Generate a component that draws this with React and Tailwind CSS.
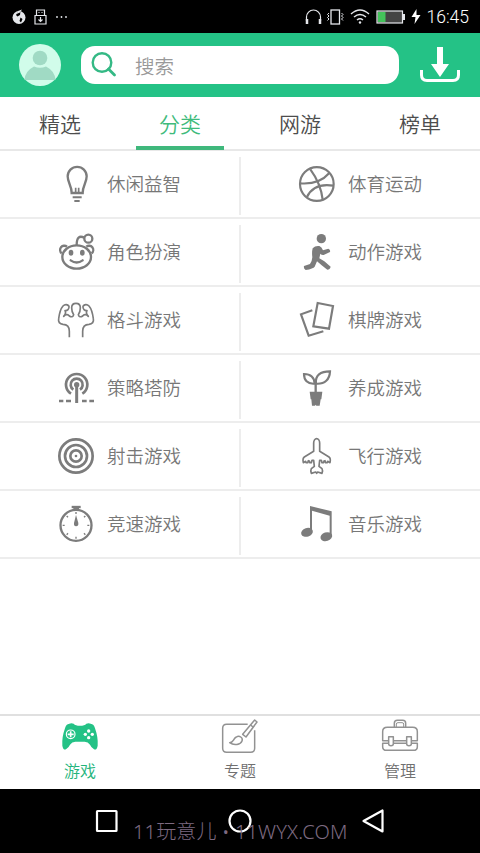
import { useState } from "react";

const BulbIcon = () => (
    <g fill="none" stroke="currentColor" strokeWidth="7">
        <path d="M41 81C41 59 29 50 29 31A28.500 28.500 0 0 1 86 31C86 50 74 59 74 81Z" />
        <path d="M53 80V65M62 80V65" strokeWidth="5" />
        <path d="M44 94H71M49 105H65" strokeWidth="6" />
    </g>
);

const AlienIcon = () => (
    <g fill="none" stroke="currentColor" strokeWidth="7">
        <ellipse cx="56" cy="69" rx="43" ry="35" />
        <path d="M11 58A11 11 0 1 1 27 38M101 58A11 11 0 1 0 85 38" />
        <path d="M56 33C56 10 64 4 79 11" />
        <circle cx="91" cy="14" r="12" />
        <path d="M38 79Q56 92 74 79" strokeLinecap="round" />
        <ellipse cx="39" cy="56" rx="7" ry="9" fill="currentColor" stroke="none" />
        <ellipse cx="73" cy="56" rx="7" ry="9" fill="currentColor" stroke="none" />
    </g>
);

const MuscleIcon = () => (
    <g fill="none" stroke="currentColor" strokeWidth="5" strokeLinejoin="round">
        <path d="M34 106V88C34 74 26 67 15 67C5 66 0 60 2 50C4 35 8 20 15 12C21 6 29 7 33 13C34 21 28 27 21 26C25 31 21 38 17 43C24 35 31 38 34 42C40 46 46 45 47 38C42 31 41 22 41 17C41 7 46 4 54 4C62 4 67 7 67 17C67 22 66 31 61 38C62 45 68 46 74 42C77 38 84 35 91 43C87 38 83 31 87 26C80 27 74 21 75 13C79 7 87 6 93 12C100 20 104 35 106 50C108 60 103 66 93 67C82 67 74 74 74 88V106" />
    </g>
);

const TowerIcon = () => (
    <g fill="none" stroke="currentColor" strokeWidth="8">
        <path d="M39 71A32 32 0 1 1 73 71" />
        <path d="M46 59A18 18 0 1 1 66 59" />
        <path d="M56 46V99" strokeWidth="9" />
        <circle cx="56" cy="44" r="8" fill="currentColor" stroke="none" />
        <path d="M3 93H16M24 93H39M72 93H86M94 93H108" />
    </g>
);

const TargetIcon = () => (
    <g fill="none" stroke="currentColor" strokeWidth="8">
        <circle cx="54" cy="54" r="50" />
        <circle cx="54" cy="54" r="33" />
        <circle cx="54" cy="54" r="17" />
        <circle cx="54" cy="54" r="4" fill="currentColor" stroke="none" />
    </g>
);

const StopwatchIcon = () => (
    <g fill="none" stroke="currentColor" strokeWidth="7">
        <circle cx="54" cy="58" r="46.500" />
        <path d="M41 3H68" />
        <path d="M46 8H63" strokeWidth="9" />
        <path d="M54 27L48 51Q47 61 54 61Q62 61 61 51Z" fill="currentColor" stroke="none" />
        <path d="M54 18V24M54 92V98M14 58H20M88 58H94M26 30L30 34M82 30L78 34M26 86L30 82M82 86L78 82" strokeWidth="4" />
    </g>
);

const BallIcon = () => (
    <g fill="none" stroke="currentColor" strokeWidth="6.500">
        <circle cx="53.500" cy="54" r="50.500" />
        <path d="M3 52C40 55 71 44 91 21" />
        <path d="M34 10C54 37 67 66 71 101" />
        <path d="M24 93C39 61 71 54 103 59" />
    </g>
);

const RunnerIcon = () => (
    <g fill="currentColor">
        <circle cx="67" cy="14" r="14" />
        <path d="M41 43Q49 34 61 36Q68 39 72 49L88 44Q95 47 93 54L74 63Q68 64 64 59L61 73L76 82L95 98Q93 107 85 107L68 94L54 82L47 98Q43 104 20 108Q13 104 15 96L33 90Q39 83 40 70Q38 54 41 43Z" />
    </g>
);

const CardsIcon = () => (
    <g fill="none" stroke="currentColor" strokeWidth="6.500">
        <path d="M56 3L102 12L90 80L43 73Z" />
        <path d="M40 25L6 37L29 101L73 88" />
    </g>
);

const PlantIcon = () => (
    <g fill="none" stroke="currentColor" strokeWidth="6.500">
        <path d="M50 66V42" strokeWidth="7" />
        <path d="M51 41C48 16 64 4 93 4C92 28 78 43 51 41Z" />
        <path d="M47 41C46 23 36 12 15 12C15 30 25 43 47 41Z" />
        <path d="M32 65H70L67 88H65L62 107H52L50 104L48 107H39L37 88H35Z" fill="currentColor" stroke="none" />
    </g>
);

const PlaneIcon = () => (
    <g fill="none" stroke="currentColor" strokeWidth="5" strokeLinejoin="round">
        <path d="M53 2C48 2 44 8 44 15V40L16 57Q10 61 13 74L20 70L21 74H26L28 68L31 69L32 74H37L39 67H44L46 85L37 92Q34 97 37 106L50 102L53 106L56 102L69 106Q72 97 69 92L60 85L62 67H67L69 74H74L75 69L78 68L80 74H85L86 70L93 74Q96 61 90 57L62 40V15C62 8 58 2 53 2Z" />
    </g>
);

const MusicIcon = () => (
    <g fill="currentColor">
        <path d="M33 0L98 16V92H92V29L39 14V80H33Z" />
        <ellipse cx="24" cy="79" rx="18" ry="13" transform="rotate(-18 24 79)" />
        <ellipse cx="82" cy="92" rx="18" ry="13" transform="rotate(-18 82 92)" />
    </g>
);

const GamepadIcon = () => (
    <g>
        <path d="M22 14Q28 11 35 14Q40 20 54 20Q68 20 73 14Q80 11 86 14Q96 15 99 28Q109 56 107 80Q104 95 96 91Q88 86 84 77Q78 68 68 68H40Q30 68 24 77Q20 86 12 91Q4 95 1 80Q-1 56 9 28Q12 15 22 14Z" fill="currentColor" />
        <g fill="none" stroke="white" strokeWidth="3.500">
            <circle cx="26" cy="46" r="13" />
            <path d="M26 37V55M17 46H35" strokeWidth="5" />
        </g>
        <g fill="white">
            <circle cx="80" cy="36" r="5" />
            <circle cx="80" cy="56" r="5" />
            <circle cx="70" cy="46" r="5" />
            <circle cx="91" cy="46" r="5" />
        </g>
    </g>
);

const BrushIcon = () => (
    <g fill="none" stroke="currentColor" strokeWidth="4.500" strokeLinejoin="round">
        <path d="M77 16H14Q2 16 2 28V88Q2 100 14 100H86Q98 100 98 88V34" />
        <path d="M98 3L105 9L72 54L62 46Z" />
        <path d="M86 18L93 24" />
        <path d="M43 54C52 48 64 56 60 66C56 77 36 81 23 71C36 70 32 60 43 54Z" />
    </g>
);

const ToolboxIcon = () => (
    <g fill="none" stroke="currentColor" strokeWidth="4.500" strokeLinejoin="round">
        <path d="M37 24V13Q37 4 46 4H62Q71 4 71 13V24" />
        <path d="M43 24V15Q43 11 48 11H60Q65 11 65 15V24" strokeWidth="3" />
        <path d="M18 65H2V38Q2 25 16 25H92Q106 25 106 38V65H90M35 65H73" />
        <path d="M18 73H2V83Q2 94 14 94H94Q106 94 106 83V73H90M35 73H73" />
        <path d="M20 53H34V74Q34 80 27 80Q20 80 20 74ZM74 53H88V74Q88 80 81 80Q74 80 74 74Z" />
    </g>
);

const categories = [
    { name: "休闲益智", icon: BulbIcon },
    { name: "体育运动", icon: BallIcon },
    { name: "角色扮演", icon: AlienIcon },
    { name: "动作游戏", icon: RunnerIcon },
    { name: "格斗游戏", icon: MuscleIcon },
    { name: "棋牌游戏", icon: CardsIcon },
    { name: "策略塔防", icon: TowerIcon },
    { name: "养成游戏", icon: PlantIcon },
    { name: "射击游戏", icon: TargetIcon },
    { name: "飞行游戏", icon: PlaneIcon },
    { name: "竞速游戏", icon: StopwatchIcon },
    { name: "音乐游戏", icon: MusicIcon },
];

const tabs = ["精选", "分类", "网游", "榜单"];

const navItems = [
    { name: "游戏", icon: GamepadIcon },
    { name: "专题", icon: BrushIcon },
    { name: "管理", icon: ToolboxIcon },
];

function StatusBar() {
    return (
        <div className="h-[33px] shrink-0 bg-black text-gray-200 flex items-center justify-between pl-3 pr-[11px]">
            <div className="flex items-center">
                <svg width="14" height="16" viewBox="0 0 14 16">
                    <circle cx="7" cy="8.500" r="6.500" fill="currentColor" />
                    <path d="M5.500 3.500L8.500 2L8 6L5.500 7.500L4 6ZM8.500 8.500L10.500 10L9 13.500L7.500 12Z" fill="black" />
                    <path d="M10 0.500L6 2L4.500 5L8 3.500Z" fill="currentColor" />
                </svg>
                <svg className="ml-2" width="13" height="16" viewBox="0 0 13 16" fill="none" stroke="currentColor" strokeWidth="1.200">
                    <path d="M2.500 6.500V1H10.500V6.500M1 6.500H12V15H1ZM6.500 8V12.500M4.500 10.500L6.500 12.500L8.500 10.500M4.500 3.500H5.500M7.500 3.500H8.500" />
                </svg>
                <svg className="ml-2" width="13" height="4" viewBox="0 0 13 4" fill="currentColor">
                    <circle cx="2" cy="2" r="0.900" />
                    <circle cx="6.500" cy="2" r="0.900" />
                    <circle cx="11" cy="2" r="0.900" />
                </svg>
            </div>
            <div className="flex items-center">
                <svg width="17" height="16" viewBox="0 0 17 16" fill="none" stroke="currentColor">
                    <path d="M1.500 12V8A7 7 0 0 1 15.500 8V12" strokeWidth="1.200" />
                    <path d="M2 10V15M15 10V15" strokeWidth="2.500" />
                </svg>
                <svg className="ml-1" width="18" height="16" viewBox="0 0 18 16" fill="none" stroke="currentColor" strokeWidth="1">
                    <rect x="5" y="1" width="8.500" height="14" strokeWidth="1.300" />
                    <path d="M3 4L1.500 5.500L3 7L1.500 8.500L3 10L1.500 11.500M15.500 4L17 5.500L15.500 7L17 8.500L15.500 10L17 11.500" />
                </svg>
                <svg className="ml-[6px]" width="20" height="15" viewBox="0 0 20 15" fill="none" stroke="currentColor" strokeWidth="1.500">
                    <path d="M1 5Q10 -3 19 5M4 8Q10 3 16 8M7 11Q10 8.500 13 11" />
                    <circle cx="10" cy="13.500" r="1.200" fill="currentColor" stroke="none" />
                </svg>
                <svg className="ml-[6px]" width="30" height="14" viewBox="0 0 30 14">
                    <rect x="1" y="1" width="25.500" height="12" fill="#444444" stroke="currentColor" strokeWidth="1.200" />
                    <rect x="2" y="2" width="7.500" height="10" fill="#43c25a" />
                    <rect x="27" y="4" width="2" height="6" fill="currentColor" />
                </svg>
                <svg className="ml-[5px]" width="10" height="15" viewBox="0 0 10 15">
                    <path d="M5.500 0L0.500 8H4.500L3.500 15L9.500 6H5.500Z" fill="white" />
                </svg>
                <span className="ml-[5px] text-[17.5px] leading-none font-light font-[Roboto,sans-serif] relative top-px text-white">16:45</span>
            </div>
        </div>
    );
}

function Header() {
    return (
        <header className="h-16 shrink-0 bg-[#24c286] flex items-center pl-[19px] pr-5">
            <svg width="42" height="42" viewBox="0 0 42 42">
                <circle cx="21" cy="21" r="21" fill="#d1fcea" />
                <circle cx="21" cy="14" r="7.300" fill="#a0dac4" />
                <path d="M5.500 36Q6 27 15 22.500Q21 25 27 22.500Q36 27 36.500 36Z" fill="#a0dac4" />
            </svg>
            <div className="ml-5 w-[318px] h-[38px] rounded-[14px] bg-white flex items-center pl-[10px]">
                <svg width="26" height="26" viewBox="0 0 26 26" fill="none" stroke="#34b985" strokeWidth="2.400" strokeLinecap="round">
                    <circle cx="11" cy="10.500" r="9.300" />
                    <path d="M17.500 17L23.500 23" strokeWidth="2.800" />
                </svg>
                <span className="ml-[18px] pt-px text-[19.5px] leading-none text-[#999999]">搜索</span>
            </div>
            <svg className="ml-[21px]" width="40" height="38" viewBox="0 0 40 38" fill="none" stroke="white">
                <path d="M1.500 24V29Q1.500 34.500 7 34.500H33Q38.500 34.500 38.500 29V24" strokeWidth="3" />
                <path d="M17 1H23V18H29L20 31L11 18H17Z" fill="white" stroke="none" />
            </svg>
        </header>
    );
}

export default function App() {
    const [activeTab, setActiveTab] = useState("分类");
    const [activeNav, setActiveNav] = useState("游戏");

    return (
        <div className="w-[480px] h-[853px] overflow-hidden flex flex-col bg-white font-[350] font-['Noto_Sans_CJK_SC',sans-serif]">
            <StatusBar />
            <Header />

            <nav className="h-[54px] shrink-0 grid grid-cols-4 border-b-2 border-[#e8e8e8]">
                {tabs.map((tab) => (
                    <button
                        key={tab}
                        onClick={() => setActiveTab(tab)}
                        className={`relative flex items-center justify-center text-[21px] leading-none ${activeTab === tab ? "text-[#3fbb7c]" : "text-[#4d4d4d]"}`}
                    >
                        {tab}
                        {activeTab === tab && (
                            <span className="absolute -bottom-px left-4 right-4 h-1 bg-[#3fb87c]"></span>
                        )}
                    </button>
                ))}
            </nav>

            <main className="flex-1 grid grid-cols-2 content-start">
                {categories.map(({ name, icon: Icon }, index) => (
                    <div
                        key={name}
                        className={`h-[68px] flex items-center border-b-2 border-[#ededed] text-[#7c7c7c] ${index % 2 === 0 ? "pl-[58px]" : "pl-[59px]"}`}
                    >
                        <svg width="36" height="36" viewBox="0 0 108 108" className="overflow-visible">
                            <Icon />
                        </svg>
                        <span className="ml-[13px] pb-0.5 text-[18.5px] leading-none text-[#777777]">{name}</span>
                        {index % 2 === 0 && (
                            <span className="ml-auto -mr-px mt-1 w-0.5 h-[58px] bg-[#ededed]"></span>
                        )}
                    </div>
                ))}
            </main>

            <footer className="h-[75px] shrink-0 grid grid-cols-3 border-t-2 border-[#e0e0e0]">
                {navItems.map(({ name, icon: Icon }) => (
                    <button
                        key={name}
                        onClick={() => setActiveNav(name)}
                        className={`flex flex-col items-center pt-[3px] ${activeNav === name ? "text-[#24c286]" : "text-[#929292]"}`}
                    >
                        <svg width="36" height="34" viewBox="0 0 108 102" className="overflow-visible">
                            <Icon />
                        </svg>
                        <span className={`mt-[9px] text-[16px] leading-none ${activeNav === name ? "text-[#22b47b]" : "text-[#707070]"}`}>{name}</span>
                    </button>
                ))}
            </footer>

            <div className="relative h-16 shrink-0 bg-black flex items-center justify-between pl-[95px] pr-[95px]">
                <svg width="23" height="24" viewBox="0 0 23 24" fill="none" stroke="white" strokeWidth="2.200">
                    <rect x="2" y="2" width="19.500" height="20" rx="0.500" />
                </svg>
                <svg width="24" height="24" viewBox="0 0 24 24" fill="none" stroke="white" strokeWidth="2.200">
                    <circle cx="12" cy="12" r="10.500" />
                </svg>
                <svg width="23" height="24" viewBox="0 0 23 24" fill="none" stroke="white" strokeWidth="2.200" strokeLinejoin="round">
                    <path d="M20.500 1.500V22.500L1.500 12Z" />
                </svg>
                <span className="absolute left-[133px] top-[33px] text-[20px] leading-none tracking-[0.15px] whitespace-nowrap font-light text-[#7d6a80] font-['Noto_Sans','Noto_Sans_CJK_SC',sans-serif]">11玩意儿 • 11WYX.COM</span>
            </div>
        </div>
    );
}
